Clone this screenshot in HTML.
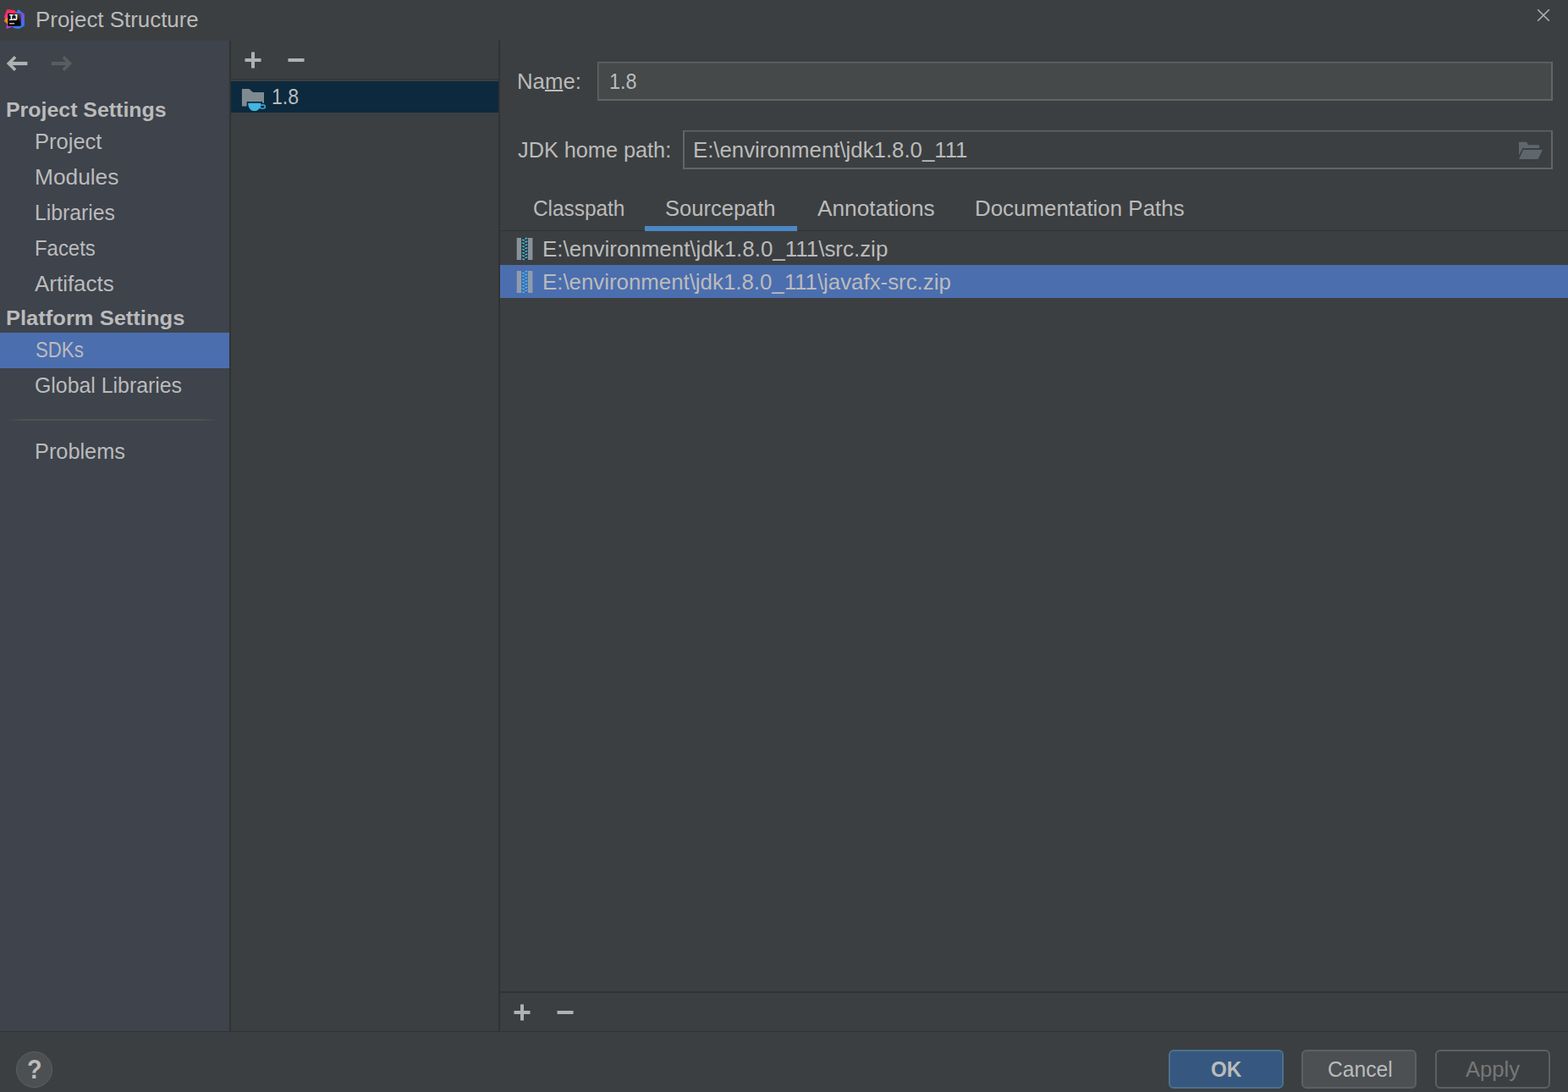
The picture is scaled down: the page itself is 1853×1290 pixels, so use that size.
<!DOCTYPE html>
<html lang="en"><head><meta charset="utf-8"><title>Project Structure</title>
<style>
html,body{margin:0;padding:0;}
body{width:1853px;height:1290px;background:#3c3f41;position:relative;overflow:hidden;font-family:"Liberation Sans",sans-serif;color:#bbbbbb;}
.a{position:absolute;}
.t{position:absolute;white-space:pre;line-height:1;font-size:25px;transform-origin:0 0;}
.u{text-decoration:underline;text-decoration-thickness:2px;text-underline-offset:1px;}
svg{position:absolute;overflow:visible;}
.fld{height:46px;box-sizing:border-box;border:2px solid #646464;border-top-width:1px;box-shadow:inset 0 1px 0 rgba(100,100,100,.45);}
.btn{position:absolute;box-sizing:border-box;height:46px;width:136px;top:1240px;border-radius:6px;border:2px solid #5e6060;}
</style></head><body>
<!-- title bar -->
<div class="a" id="titlebar" style="left:0;top:0;width:1853px;height:48px;background:#3c3f41"></div>
<svg id="ic-app" style="left:0px;top:6px" width="36" height="34" viewBox="0 6 36 34">
<defs>
<linearGradient id="gb" x1="0.3" y1="0" x2="0.6" y2="1"><stop offset="0" stop-color="#2a7ff7"/><stop offset="0.15" stop-color="#3b74f2"/><stop offset="0.45" stop-color="#7a4fe0"/><stop offset="0.7" stop-color="#5c62ee"/><stop offset="1" stop-color="#1f86f7"/></linearGradient>
<linearGradient id="gp" x1="0" y1="0" x2="0" y2="1"><stop offset="0" stop-color="#fe2857"/><stop offset="0.75" stop-color="#f0337d"/><stop offset="1" stop-color="#e0408f"/></linearGradient>
<linearGradient id="gv" x1="0" y1="0" x2="1" y2="0"><stop offset="0" stop-color="#a63fe0"/><stop offset="0.5" stop-color="#b63fd0"/><stop offset="1" stop-color="#5e5ff0"/></linearGradient>
<linearGradient id="gk" x1="1" y1="0" x2="0.3" y2="0.7"><stop offset="0" stop-color="#5a5a5a"/><stop offset="0.6" stop-color="#0a0a0a"/><stop offset="1" stop-color="#000"/></linearGradient>
</defs>
<path d="M8.2 10.9 L17.2 12 L19.2 14.6 L19.2 21.5 L5.2 21.2 L5.1 19.5 Z" fill="url(#gp)"/>
<path d="M6.6 21 L4.9 25 L8.6 28.3 L12 28 L12 21 Z" fill="#fc801d"/>
<path d="M8.5 28 L7 33.9 L14.8 31.4 L18 31.4 L18 28 Z" fill="url(#gv)"/>
<path d="M21.6 10.9 L29 16.8 L28.8 30.5 L22.6 33.9 L17.2 33.6 L14.6 31.2 L19 14.7 Z" fill="url(#gb)"/>
<rect x="9.3" y="15.8" width="15.5" height="15" rx="0.8" fill="url(#gk)"/>
<text x="10.3" y="23.8" font-family="Liberation Mono, DejaVu Sans Mono, monospace" font-weight="700" font-size="10.4" letter-spacing="-1.6" fill="#fff">IJ</text>
<rect x="11.1" y="27" width="6" height="1.6" fill="#b0b0b0"/>
</svg>
<span class="t" id="title" style="left:42.36px;top:11.04px;transform:scaleX(1.0353);">Project Structure</span>
<svg id="ic-close" style="left:1810px;top:4px" width="28" height="28" viewBox="1810 4 28 28"><path d="M1817.2 11.2 L1830.8 24.8 M1830.8 11.2 L1817.2 24.8" stroke="#b4b4b4" stroke-width="1.5" fill="none"/></svg>
<!-- sidebar -->
<div class="a" id="sidebar" style="left:0;top:48px;width:271px;height:1170px;background:#3e434c"></div>
<svg id="ic-arrows" style="left:0px;top:60px" width="100" height="30" viewBox="0 60 100 30"><path d="M32.4 75 H11.3" stroke="#afb1b3" stroke-width="4.2" fill="none"/><path d="M18.1 67.2 L10.3 75 L18.1 82.8" stroke="#afb1b3" stroke-width="3.6" fill="none" stroke-linejoin="miter"/><path d="M60.9 75 H81.6" stroke="#5a5d60" stroke-width="4.2" fill="none"/><path d="M74.8 67.2 L82.6 75 L74.8 82.8" stroke="#5a5d60" stroke-width="3.6" fill="none" stroke-linejoin="miter"/></svg>
<span class="t" id="h1" style="left:6.77px;top:117.68px;font-size:24px;transform:scaleX(1.0376);font-weight:700;">Project Settings</span>
<span class="t" id="project" style="left:40.77px;top:154.84px;transform:scaleX(1.0211);">Project</span>
<span class="t" id="modules" style="left:40.74px;top:196.84px;transform:scaleX(1.0519);">Modules</span>
<span class="t" id="libraries" style="left:40.65px;top:238.84px;transform:scaleX(0.9904);">Libraries</span>
<span class="t" id="facets" style="left:41.1px;top:280.84px;transform:scaleX(0.9565);">Facets</span>
<span class="t" id="artifacts" style="left:41.35px;top:322.84px;transform:scaleX(1.037);">Artifacts</span>
<span class="t" id="h2" style="left:6.82px;top:363.68px;font-size:24px;transform:scaleX(1.0636);font-weight:700;">Platform Settings</span>
<div class="a" id="sel-sdk" style="left:0;top:393px;width:271px;height:42px;background:#4b6eaf"></div>
<span class="t" id="sdks" style="left:41.6px;top:400.84px;transform:scaleX(0.8887);">SDKs</span>
<span class="t" id="globallib" style="left:41.3px;top:442.84px;transform:scaleX(0.9938);">Global Libraries</span>
<div class="a" id="sep" style="left:3px;top:495px;width:259px;height:2px;background:linear-gradient(90deg,rgba(82,82,80,0),#52524f 11%,#52524f 89%,rgba(82,82,80,0))"></div>
<span class="t" id="problems" style="left:40.92px;top:520.84px;transform:scaleX(1.0123);">Problems</span>
<div class="a" id="div1" style="left:271px;top:48px;width:2px;height:1170px;background:#323232"></div>
<!-- middle panel -->
<svg id="ic-pm1" style="left:287px;top:59px" width="75" height="24" viewBox="287 59 75 24"><rect x="289.5" y="69" width="19" height="4" fill="#afb1b3"/><rect x="297" y="61.5" width="4" height="19" fill="#afb1b3"/><rect x="340.5" y="69" width="19" height="4" fill="#afb1b3"/></svg>
<div class="a" id="midline" style="left:273px;top:93px;width:316px;height:1px;background:#323232"></div>
<div class="a" id="midsel" style="left:273px;top:96px;width:316px;height:37px;background:#0d293e"></div>
<svg id="ic-sdk" style="left:280px;top:98px" width="40" height="36" viewBox="280 98 40 36">
<path d="M285.9 104.9 H294.4 L299 108.9 H312 V121.7 H310 V119.9 H291.6 V125.4 H285.9 Z" fill="#7f8b91"/>
<path d="M293.2 121.7 H308.2 C308.2 127.5 305.2 131 300.7 131 C296.2 131 293.2 127.5 293.2 121.7 Z" fill="#40b6e0"/>
<rect x="307.2" y="124" width="6.1" height="4.1" rx="2.05" fill="none" stroke="#40b6e0" stroke-width="1.4"/>
</svg>
<span class="t" id="mid18" style="left:321.31px;top:101.84px;transform:scaleX(0.9228);">1.8</span>
<div class="a" id="div2" style="left:589px;top:48px;width:2px;height:1170px;background:#323232"></div>
<!-- right panel -->
<span class="t" id="name" style="left:610.86px;top:83.84px;transform:scaleX(1.0301);">Na<span class="u">m</span>e:</span>
<div class="a fld" id="f1" style="left:706px;top:73px;width:1129px;background:#45494a;border-left-width:1px;box-shadow:inset 1px 1px 0 rgba(100,100,100,.45)"></div>
<span class="t" id="f18" style="left:720.3px;top:83.84px;transform:scaleX(0.9333);">1.8</span>
<span class="t" id="jdk" style="left:612.05px;top:164.84px;transform:scaleX(1.0108);">JDK home path:</span>
<div class="a fld" id="f2" style="left:807px;top:154px;width:1028px;background:#3c3f41"></div>
<span class="t" id="fpath" style="left:818.97px;top:164.84px;transform:scaleX(1.0314);">E:\environment\jdk1.8.0_111</span>
<svg id="ic-folder" style="left:1790px;top:162px" width="40" height="32" viewBox="1790 162 40 32">
<path d="M1795 167.7 H1803.9 L1806.3 171.2 H1819.1 V175 H1799.3 L1795 183.6 Z" fill="#5e686c"/>
<path d="M1800.2 177 H1823 L1817.6 188 H1795 Z" fill="#5e686c"/>
</svg>
<span class="t" id="tab1" style="left:630.11px;top:233.84px;transform:scaleX(0.9749);">Classpath</span>
<span class="t" id="tab2" style="left:786.13px;top:233.84px;transform:scaleX(1.0211);">Sourcepath</span>
<span class="t" id="tab3" style="left:966.47px;top:233.84px;transform:scaleX(1.0505);">Annotations</span>
<span class="t" id="tab4" style="left:1152.32px;top:233.84px;transform:scaleX(1.0358);">Documentation Paths</span>
<div class="a" id="tabline" style="left:591px;top:272px;width:1262px;height:1px;background:#323232"></div>
<div class="a" id="tabul" style="left:762px;top:267px;width:180px;height:6px;background:#4a88c7"></div>
<svg id="ic-zip1" style="left:606px;top:278px" width="28" height="32" viewBox="606 278 28 32"><rect x="610.7" y="281" width="5.4" height="26" fill="#87939a"/><rect x="616.1" y="281" width="7.8" height="26" fill="#313334"/><rect x="623.9" y="281" width="5.5" height="26" fill="#87939a"/><ellipse cx="618.4" cy="283.6" rx="1.75" ry="0.95" fill="#40b6e0" transform="rotate(15 618.4 283.6)"/><ellipse cx="618.4" cy="287.3" rx="1.75" ry="0.95" fill="#40b6e0" transform="rotate(15 618.4 287.3)"/><ellipse cx="618.4" cy="291.2" rx="1.75" ry="0.95" fill="#40b6e0" transform="rotate(15 618.4 291.2)"/><ellipse cx="618.4" cy="294.8" rx="1.75" ry="0.95" fill="#40b6e0" transform="rotate(15 618.4 294.8)"/><ellipse cx="618.4" cy="298.7" rx="1.75" ry="0.95" fill="#40b6e0" transform="rotate(15 618.4 298.7)"/><ellipse cx="618.4" cy="302.4" rx="1.75" ry="0.95" fill="#40b6e0" transform="rotate(15 618.4 302.4)"/><ellipse cx="618.4" cy="306.2" rx="1.75" ry="0.95" fill="#40b6e0" transform="rotate(15 618.4 306.2)"/><ellipse cx="621.8" cy="281.7" rx="1.75" ry="0.95" fill="#40b6e0" transform="rotate(-15 621.8 281.7)"/><ellipse cx="621.8" cy="285.5" rx="1.75" ry="0.95" fill="#40b6e0" transform="rotate(-15 621.8 285.5)"/><ellipse cx="621.8" cy="289.3" rx="1.75" ry="0.95" fill="#40b6e0" transform="rotate(-15 621.8 289.3)"/><ellipse cx="621.8" cy="293.1" rx="1.75" ry="0.95" fill="#40b6e0" transform="rotate(-15 621.8 293.1)"/><ellipse cx="621.8" cy="296.8" rx="1.75" ry="0.95" fill="#40b6e0" transform="rotate(-15 621.8 296.8)"/><ellipse cx="621.8" cy="300.6" rx="1.75" ry="0.95" fill="#40b6e0" transform="rotate(-15 621.8 300.6)"/><ellipse cx="621.8" cy="304.3" rx="1.75" ry="0.95" fill="#40b6e0" transform="rotate(-15 621.8 304.3)"/></svg>
<span class="t" id="row1" style="left:640.96px;top:281.54px;transform:scaleX(1.037);">E:\environment\jdk1.8.0_111\src.zip</span>
<div class="a" id="rowsel" style="left:591px;top:313px;width:1262px;height:39px;background:#4b6eaf"></div>
<svg id="ic-zip2" style="left:606px;top:317px" width="28" height="32" viewBox="606 317 28 32"><rect x="610.7" y="320" width="5.4" height="26" fill="#8e9dad"/><rect x="616.1" y="320" width="7.8" height="26" fill="#4766ae"/><rect x="623.9" y="320" width="5.5" height="26" fill="#8e9dad"/><ellipse cx="618.4" cy="322.6" rx="1.75" ry="0.95" fill="#40b6e0" transform="rotate(15 618.4 322.6)"/><ellipse cx="618.4" cy="326.3" rx="1.75" ry="0.95" fill="#40b6e0" transform="rotate(15 618.4 326.3)"/><ellipse cx="618.4" cy="330.2" rx="1.75" ry="0.95" fill="#40b6e0" transform="rotate(15 618.4 330.2)"/><ellipse cx="618.4" cy="333.8" rx="1.75" ry="0.95" fill="#40b6e0" transform="rotate(15 618.4 333.8)"/><ellipse cx="618.4" cy="337.7" rx="1.75" ry="0.95" fill="#40b6e0" transform="rotate(15 618.4 337.7)"/><ellipse cx="618.4" cy="341.4" rx="1.75" ry="0.95" fill="#40b6e0" transform="rotate(15 618.4 341.4)"/><ellipse cx="618.4" cy="345.2" rx="1.75" ry="0.95" fill="#40b6e0" transform="rotate(15 618.4 345.2)"/><ellipse cx="621.8" cy="320.7" rx="1.75" ry="0.95" fill="#40b6e0" transform="rotate(-15 621.8 320.7)"/><ellipse cx="621.8" cy="324.5" rx="1.75" ry="0.95" fill="#40b6e0" transform="rotate(-15 621.8 324.5)"/><ellipse cx="621.8" cy="328.3" rx="1.75" ry="0.95" fill="#40b6e0" transform="rotate(-15 621.8 328.3)"/><ellipse cx="621.8" cy="332.1" rx="1.75" ry="0.95" fill="#40b6e0" transform="rotate(-15 621.8 332.1)"/><ellipse cx="621.8" cy="335.8" rx="1.75" ry="0.95" fill="#40b6e0" transform="rotate(-15 621.8 335.8)"/><ellipse cx="621.8" cy="339.6" rx="1.75" ry="0.95" fill="#40b6e0" transform="rotate(-15 621.8 339.6)"/><ellipse cx="621.8" cy="343.3" rx="1.75" ry="0.95" fill="#40b6e0" transform="rotate(-15 621.8 343.3)"/></svg>
<span class="t" id="row2" style="left:640.93px;top:320.54px;transform:scaleX(1.033);">E:\environment\jdk1.8.0_111\javafx-src.zip</span>
<div class="a" id="botline" style="left:591px;top:1171px;width:1262px;height:2px;background:#323232"></div>
<svg id="ic-pm2" style="left:605px;top:1184px" width="75" height="24" viewBox="605 1184 75 24"><rect x="607.5" y="1194" width="19" height="4" fill="#afb1b3"/><rect x="615" y="1186.5" width="4" height="19" fill="#afb1b3"/><rect x="658.5" y="1194" width="19" height="4" fill="#afb1b3"/></svg>
<div class="a" id="footline" style="left:0;top:1218px;width:1853px;height:1px;background:#323232"></div>
<!-- footer -->
<div class="a" id="help" style="left:19px;top:1242px;width:43px;height:43px;box-sizing:border-box;border-radius:50%;background:#4c5052;border:1px solid #5e6060"></div>
<span class="t" id="q" style="left:32.0px;top:1247.76px;font-size:31px;transform:scaleX(0.93);font-weight:700;">?</span>
<div class="btn" id="ok" style="left:1381px;background:#365880;border-color:#4c708c"></div>
<span class="t" id="oktxt" style="left:1431.2px;top:1250.84px;transform:scaleX(0.968);font-weight:700;">OK</span>
<div class="btn" id="cancel" style="left:1538px;background:#4c5052"></div>
<span class="t" id="canceltxt" style="left:1569.34px;top:1250.84px;transform:scaleX(0.9848);">Cancel</span>
<div class="btn" id="apply" style="left:1696px;background:#3c3f41"></div>
<span class="t" id="applytxt" style="left:1732.06px;top:1250.84px;transform:scaleX(1.0242);color:#777777;">Apply</span>
</body></html>
